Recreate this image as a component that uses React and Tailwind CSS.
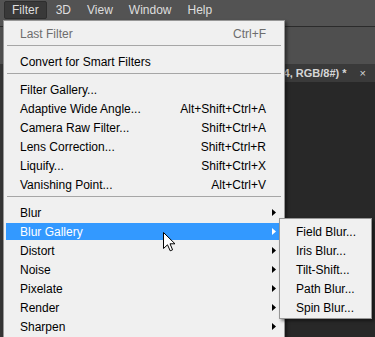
import React from 'react';

const font = { fontFamily: '"Liberation Sans", Arial, sans-serif' };

const menuItems = [
  { label: 'Last Filter', shortcut: 'Ctrl+F', disabled: true },
  'sep',
  { label: 'Convert for Smart Filters' },
  'sep',
  { label: 'Filter Gallery...' },
  { label: 'Adaptive Wide Angle...', shortcut: 'Alt+Shift+Ctrl+A' },
  { label: 'Camera Raw Filter...', shortcut: 'Shift+Ctrl+A' },
  { label: 'Lens Correction...', shortcut: 'Shift+Ctrl+R' },
  { label: 'Liquify...', shortcut: 'Shift+Ctrl+X' },
  { label: 'Vanishing Point...', shortcut: 'Alt+Ctrl+V' },
  'sep',
  { label: 'Blur', sub: true },
  { label: 'Blur Gallery', sub: true, active: true },
  { label: 'Distort', sub: true },
  { label: 'Noise', sub: true },
  { label: 'Pixelate', sub: true },
  { label: 'Render', sub: true },
  { label: 'Sharpen', sub: true },
];

const subItems = ['Field Blur...', 'Iris Blur...', 'Tilt-Shift...', 'Path Blur...', 'Spin Blur...'];

function SubArrow({ active }) {
  return (
    <svg width="4" height="7" viewBox="0 0 4 7" className="ml-auto mr-[5px] shrink-0">
      <polygon points="0,0 4,3.5 0,7" fill={active ? '#ffffff' : '#000000'} />
    </svg>
  );
}

function MenuRow({ item }) {
  if (item === 'sep') {
    return (
      <div className="h-[9px] shrink-0 pt-[2px] px-[3px]">
        <div className="border-t border-[#a6a6a6]" />
      </div>
    );
  }
  const color = item.active ? 'text-white bg-[#3399ff]' : item.disabled ? 'text-[#6d6d6d]' : 'text-black';
  return (
    <div className={`h-[17px] shrink-0 my-[1px] ml-[2px] mr-[3px] pl-[14px] flex items-center ${color}`}>
      <span className="whitespace-nowrap">{item.label}</span>
      {item.shortcut && <span className="ml-auto pr-[15px] whitespace-nowrap">{item.shortcut}</span>}
      {item.sub && <SubArrow active={item.active} />}
    </div>
  );
}

export default function App() {
  const bar = ['Filter', '3D', 'View', 'Window', 'Help'];

  return (
    <div className="relative w-[375px] h-[337px] overflow-hidden bg-[#282828] text-[12px] leading-none" style={font}>
      {/* Menu bar */}
      <div className="h-[27px] bg-[#535353] flex items-start gap-[2px] pl-[4px] pt-[1px] border-b border-[#2b2b2b]">
        {bar.map((name, i) => (
          <div
            key={name}
            className={`h-[18px] px-[7px] flex items-center text-[#dedede] rounded-[2px] ${
              i === 0 ? 'bg-[#393939] border border-[#2e2e2e] px-[6px]' : ''
            }`}
          >
            {name}
          </div>
        ))}
      </div>

      {/* Options bar */}
      <div className="h-[37px] bg-[#4f4f4f]" />

      {/* Workspace */}
      <div className="flex h-full">
        <div className="w-[3px] bg-[#353535]" />
        <div className="flex-1 flex flex-col">
          <div className="h-[18px] bg-[#3a3a3a] flex items-center justify-end pr-[9px] text-[#d6d6d6] text-[11px] font-bold gap-[13px]">
            <span>Untitled-1 @ 66.7% (Layer 4, RGB/8#) *</span>
            <span className="font-normal text-[11px]">×</span>
          </div>
          <div className="flex-1 bg-[#282828]" />
        </div>
      </div>

      {/* Filter dropdown */}
      <div className="absolute left-[3px] top-[20px] w-[282px] h-[330px] flex flex-col bg-[#f0f0f0] border border-[#979797] pt-[3px] shadow-[2px_2px_3px_rgba(0,0,0,0.45)]">
        {menuItems.map((item, i) => (
          <MenuRow key={i} item={item} />
        ))}
      </div>

      {/* Blur Gallery submenu */}
      <div className="absolute left-[279px] top-[218px] w-[93px] flex flex-col bg-[#f0f0f0] border border-[#979797] pt-[3px] pb-[1px] shadow-[2px_2px_3px_rgba(0,0,0,0.45)]">
        {subItems.map((s) => (
          <div key={s} className="h-[17px] shrink-0 my-[1px] mx-[2px] pl-[14px] flex items-center text-black whitespace-nowrap">
            {s}
          </div>
        ))}
      </div>

      {/* Mouse cursor */}
      <svg className="absolute left-[163px] top-[232px]" width="13" height="20" viewBox="0 0 13 20">
        <path
          d="M0.5 0.5 L0.5 16.5 L4.5 12.8 L7.2 18.8 L9.6 17.8 L7 11.8 L12 11.8 Z"
          fill="#ffffff"
          stroke="#000000"
          strokeWidth="1"
          strokeLinejoin="miter"
        />
      </svg>
    </div>
  );
}
